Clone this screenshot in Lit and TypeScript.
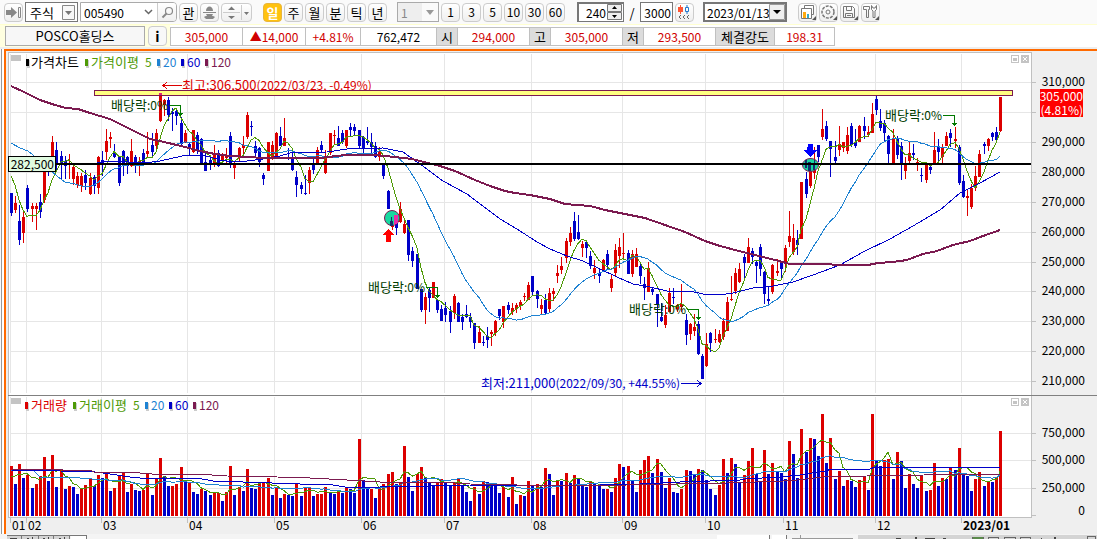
import { LitElement, html, svg, css } from "lit";
import { customElement, state } from "lit/decorators.js";

/* One session per entry: direction (r = up, b = down), then high, body top,
   body bottom, low and volume top, all in plot units. */
const SESSIONS = `
b193,193,213,216,466 r196,203,210,213,484 b205,221,240,245,464 r212,217,233,243,478 b185,188,209,212,475
r203,206,209,222,488 r203,206,209,230,484 b194,202,212,218,476 r165,168,200,203,457 b162,165,172,176,481
r136,142,164,170,455 b142,150,164,170,487 b151,156,164,179,469 b156,161,166,179,489 r154,163,165,179,486
r164,167,179,185,487 r172,176,185,188,494 r173,176,186,192,489 b170,175,183,190,485 r173,178,194,195,479
b175,177,186,194,486 r156,157,188,194,475 b151,160,165,176,478 r129,141,152,160,474 r132,137,139,148,491
b144,153,157,158,488 b156,157,183,186,476 b150,151,165,176,473 b156,157,166,174,492 r139,151,166,167,484
b155,157,162,173,490 r157,161,163,176,491 b149,153,163,165,490 r132,151,154,157,474 b133,145,152,156,495
r129,133,146,150,479 r93,94,121,122,458 r99,100,105,116,476 b97,100,115,121,486 b108,112,114,131,486
b110,111,116,125,484 b117,123,144,145,467 r130,133,142,143,482 b142,144,148,155,482 r130,130,152,153,492
b132,135,150,154,494 b138,139,163,164,489 b152,162,171,171,491 b158,160,164,170,495 r145,155,164,167,493
b150,153,166,167,493 r153,156,160,164,501 r148,156,158,164,492 b132,136,165,168,466 r162,165,168,179,495
r147,148,158,161,487 r136,145,148,155,491 r112,115,137,139,469 b121,126,127,136,488 b141,146,153,157,489
b147,148,162,167,482 b173,175,179,185,482 r142,142,171,171,478 r141,145,158,160,495 r132,133,158,159,488
b127,136,146,146,498 r118,138,146,146,494 b148,153,154,160,495 b153,157,170,171,496 b171,177,185,197,483
b182,185,189,194,496 b175,193,194,195,488 r167,170,183,194,487 b158,165,170,174,496 r147,150,164,164,494
b141,145,150,153,494 r150,156,173,174,487 r133,133,153,155,493 r130,135,136,145,494 b126,138,146,146,491
b130,133,142,144,493 r130,130,146,148,487 b123,127,130,136,489 b124,127,131,135,493 b130,130,146,149,439
b136,137,148,153,480 b127,141,143,145,489 b133,142,147,153,489 b142,146,157,158,498 r147,152,157,161,487
b164,165,176,179,484 b190,191,209,209,474 r217,221,227,230,472 b213,215,228,235,484 r202,209,222,223,483
r220,224,233,234,446 b220,220,255,261,477 b247,251,261,267,491 b254,254,289,289,474 b289,289,310,312,467
r293,297,310,324,478 b288,290,298,312,482 r282,282,298,298,486 b299,300,310,313,482 b305,309,321,321,479
b302,308,315,322,482 b306,311,322,333,486 r294,296,313,319,483 b302,303,322,322,479 b314,317,322,330,486
b305,314,317,318,492 b313,317,322,328,501 b323,323,343,349,487 r326,332,343,343,494 b336,342,343,346,481
b327,336,340,348,482 r330,332,334,346,485 r320,321,333,336,486 b309,309,316,320,493 r306,306,322,328,487
b302,305,310,314,497 r303,308,312,315,477 r303,305,309,313,504 r300,302,306,310,495 r293,296,297,301,496
r282,285,300,300,481 b276,276,292,296,485 b290,291,299,308,484 r299,305,309,315,487 b294,300,313,315,468
r288,293,309,313,474 r288,291,294,301,495 r265,273,276,283,480 r257,266,270,274,481 r238,241,258,263,473
r227,233,242,246,483 b212,221,239,241,475 b215,232,239,240,478 r241,244,248,257,485 b241,242,248,258,487
b251,256,266,269,481 r260,268,273,279,484 b269,273,276,283,485 r259,260,271,271,489 b250,254,265,270,489
r275,279,288,292,492 r244,250,273,277,478 r238,247,256,268,464 r233,253,254,260,467 b250,253,274,274,466
r250,254,274,277,481 r248,254,267,267,492 b262,266,276,284,470 b277,284,288,300,460 r262,268,292,292,456
b287,289,292,295,473 b294,294,304,327,459 b303,317,321,322,472 r305,315,325,328,488 r288,293,312,312,478
b288,297,298,304,492 r304,305,309,312,493 r284,304,307,312,489 b314,320,335,345,470 r323,324,334,340,471
r314,327,331,336,474 b321,324,354,355,469 b354,356,379,379,470 r333,344,366,367,480 b332,333,343,352,489
r329,339,340,343,495 r330,334,342,343,485 r318,321,337,340,459 r297,302,331,331,473 r276,299,300,301,458
r268,273,291,294,464 r263,269,282,283,482 b254,257,263,279,475 r238,247,263,263,461 b248,251,257,264,448
b261,262,266,283,474 b244,247,269,276,481 b271,272,294,304,450 b287,299,301,306,474 r264,265,292,294,463
r259,271,273,276,472 b262,263,269,279,473 r245,248,262,272,479 r211,236,242,247,441 r224,238,252,255,454
b230,240,245,255,478 r182,182,239,239,429 b172,179,194,198,452 r158,162,186,188,438 r147,160,173,179,439
b145,145,157,162,456 r109,129,137,140,414 b121,126,139,141,463 b141,141,149,177,438 b141,157,161,163,479
r126,144,150,156,471 r142,142,148,152,486 r127,135,151,154,480 b123,126,145,147,481 b129,142,146,148,487
r125,126,142,142,480 b117,126,131,139,477 r126,132,135,137,490 r103,114,133,133,414 b93,99,110,115,461
b109,121,128,131,466 b120,123,133,141,460 b135,136,154,164,459 r129,138,163,163,479 b136,138,155,159,452
b142,146,164,180,461 r157,164,171,179,488 r142,153,161,164,474 b144,153,155,160,484 r158,162,163,171,488
b168,175,176,182,475 r164,165,180,183,491 b165,167,170,174,490 r132,150,164,164,463 b139,146,152,162,486
r144,147,157,164,478 r132,136,146,146,479 b129,133,138,147,468 r127,139,141,148,470 b145,147,183,185,448
b175,181,197,198,474 r190,196,198,216,476 r184,188,207,209,491 r166,176,188,191,479 r150,154,177,177,472
b142,144,146,154,486 r138,139,146,151,481 b132,133,137,141,482 b127,132,140,140,478 r97,97,131,132,431`
  .trim()
  .split(/\s+/)
  .map((s) => {
    const [high, top, bottom, low, vol] = s.slice(1).split(",").map(Number);
    return { up: s[0] === "r", high, top, bottom, low, vol };
  });

const STEP = 4.139;
const FIRST = 11.4;
const VOL_BASE = 516;
const xOf = (i: number) => Math.floor(FIRST + i * STEP);

const bar = (x: number, y: number, w: number, h: number) => `M${x} ${y}h${w}v${Math.max(1, h)}h${-w}z`;

const candles = (up: boolean) =>
  SESSIONS.map((s, i) =>
    s.up !== up
      ? ""
      : bar(xOf(i), s.high, 1, s.low - s.high) + bar(xOf(i) - 1, s.top, 3, s.bottom - s.top)
  ).join("");

/* A volume bar is red when it is at least as tall as the one before it. */
const volumes = (up: boolean) =>
  SESSIONS.map((s, i) =>
    (i === 0 || s.vol <= SESSIONS[i - 1].vol) === up ? bar(xOf(i) - 1, s.vol, 3, VOL_BASE - s.vol) : ""
  ).join("");

/* Moving average over n sessions, preceded by the points carried over from earlier data. */
const average = (values: number[], n: number, lead: string) => {
  const pts = [lead];
  for (let i = n - 1; i < values.length; i++) {
    let sum = 0;
    for (let k = i - n + 1; k <= i; k++) sum += values[k];
    pts.push(`${xOf(i)},${(sum / n).toFixed(1)}`);
  }
  return pts.join(" ");
};

const closes = SESSIONS.map((s) => (s.up ? s.top : s.bottom));
const vols = SESSIONS.map((s) => s.vol);

const PRICE_MA = {
  ma5: average(closes, 5, "11,176 15,185 19,200 23,210"),
  ma20: average(closes, 20, "11,143 20,148 28,151 33,155 40,163 50,170 58,177 65,182 75,184 85,187"),
  ma60:
    "97,163 110,161 145,163 160,161 173,158 187,155 200,155 210,157 220,160 233,162 247,161 263,159 280,156 290,153 327,152 347,149 383,148 403,152 410,157 427,169 443,181 467,194 483,206 500,219 517,229 537,242 550,249 567,256 583,261 600,269 617,277 633,284 650,287 667,291 690,291 703,294 720,295 733,293 753,288 773,286 793,282 813,275 840,265 863,252 890,239 913,226 940,210 960,193 980,183 1000,172",
  ma120:
    "11,86 24,92 40,100 55,105 66,108 78,109 90,113 110,119 130,129 150,139 160,141 185,147 200,151 215,154 230,156 250,157 262,158 300,158 320,158 345,155 375,155 395,157 412,159 428,163 440,166 455,171 475,180 490,186 505,191 515,193 530,195 550,199 565,204 590,206 605,210 625,214 645,218 665,225 685,232 705,241 720,246 735,250 755,255 775,260 790,264 823,264 840,265 868,265 878,263 893,262 907,260 923,254 937,251 953,245 970,241 983,236 1000,230",
};

const VOLUME_MA = {
  ma5: average(vols, 5, "11,476 15,476 19,474 23,474"),
  ma20: average(vols, 20, "11,470 33,470 40,477 60,477 80,478"),
  ma60:
    "11,470 60,471 95,472 110,474 130,477 150,479 160,478 197,478 213,481 243,482 300,484 333,485 345,487 380,487 430,486 470,485 520,485 600,485 640,484 680,482 740,480 745,479 780,477 800,475 825,471 832,469 870,469 875,467 960,468 975,467 1000,468",
  ma120:
    "11,469 63,470 92,471 94,472 128,472 152,474 197,474 227,476 277,477 310,478 347,480 380,482 440,482 470,484 517,485 530,486 627,485 727,483 783,481 797,480 824,477 867,476 924,475 930,474 1000,474",
};

const PRICE_TICKS: [number, string][] = [
  [82, "310,000"], [112, ""], [142, "290,000"], [172, "280,000"], [202, "270,000"], [232, "260,000"],
  [262, "250,000"], [291, "240,000"], [321, "230,000"], [351, "220,000"], [381, "210,000"],
];
const VOLUME_TICKS: [number, string][] = [[433, "750,000"], [460, "500,000"], [488, "250,000"]];
const MONTHS: [number, string][] = [
  [10, "01"], [26, "02"], [101, "03"], [187, "04"], [274, "05"], [361, "06"], [444, "07"],
  [531, "08"], [622, "09"], [705, "10"], [783, "11"], [875, "12"], [961, "2023/01"],
];

const GREEN = "#4e9a06";
const SKY = "#1e82d2";
const BLUE = "#0000c8";
const WINE = "#7b1a50";
const RED = "#dc0000";

@customElement("stock-chart")
class StockChart extends LitElement {
  static styles = css`
    :host { display: block; }
    svg { display: block; width: 100%; height: auto; font: 12px "Noto Sans CJK KR", sans-serif; }
    .crisp { shape-rendering: crispEdges; }
    .line { fill: none; shape-rendering: crispEdges; }
    .ko { font-size: 13px; }
    .end { text-anchor: end; }
    .bold { font-weight: 700; }
  `;

  private legend(y: number, items: [number, number, string, string][]) {
    return svg`
      <rect x="11" y=${y - 12} width="10" height="6" fill="#c4c4c4" />
      ${items.map(
        ([x, tx, color, label]) => svg`
          <rect x=${x + 1} y=${y - 7} width="3" height="8" fill="#ccc" />
          <rect x=${x} y=${y - 8} width="3" height="7" fill=${color} />
          <text class=${/[가-힣]/.test(label) ? "ko" : ""} x=${tx} y=${y} fill=${color}>${label}</text>`
      )}`;
  }

  private paneButtons(y: number) {
    return svg`
      <g class="crisp" fill="none" stroke="#c4c4c4">
        <rect x="1011.5" y=${y + 0.5} width="7" height="7" />
        <path fill="#c4c4c4" stroke="none" d=${`M1013 ${y + 3}h4v3h-4zM1021 ${y}h8v8h-8z`} />
      </g>
      <path stroke="#fff" d=${`M1023 ${y + 2}l4 4m0-4l-4 4`} />`;
  }

  private dividend(x: number, y: number) {
    return svg`
      <text x=${x} y=${y} fill="#003c00"><tspan class="ko">배당락</tspan>:0%</text>
      <g class="crisp">
        <path fill="none" stroke="#007800" d=${`M${x + 58} ${y - 4.5}h11.5v10`} />
        <path fill="#007800" d=${`M${x + 67} ${y + 3}h5l-2 3h-1z`} />
      </g>`;
  }

  render() {
    return html`
      <svg viewBox="6 51 1091 483" role="img" aria-label="POSCO홀딩스 일봉 차트">
        <rect class="crisp" x="6" y="51" width="1091" height="483" fill="#efefef" />
        <g class="crisp">
          <rect x="8" y="52" width="1024" height="466" fill="#c0c0c0" />
          <rect x="9" y="53" width="1022" height="464" fill="#fff" />
          ${MONTHS.map(([x]) => svg`
            <path fill="#e6e6e6" d=${`M${x} 54h1v339h-1zM${x} 397h1v120h-1z`} />
            <rect x=${x} y="518" width="1" height="5" fill="#c0c0c0" />`)}
          ${[...PRICE_TICKS, ...VOLUME_TICKS].map(([y]) => svg`
            <rect x="11" y=${y} width="1020" height="1" fill="#e6e6e6" />
            <rect x="1032" y=${y} width="4" height="1" fill="#c0c0c0" />`)}
          <rect x="1032" y="515" width="4" height="1" fill="#c0c0c0" />
          <rect x="8" y="395" width="1089" height="1" fill="#808080" />
          <path fill=${RED} d=${candles(true)} />
          <path fill=${BLUE} d=${candles(false)} />
          <path fill=${RED} d=${volumes(true)} />
          <path fill=${BLUE} d=${volumes(false)} />
        </g>

        ${[PRICE_MA, VOLUME_MA].map((m, k) => svg`
          <polyline class="line" stroke=${GREEN} points=${m.ma5} />
          <polyline class="line" stroke=${SKY} points=${m.ma20} />
          <polyline class="line" stroke=${BLUE} points=${m.ma60} />
          <polyline class="line" stroke=${WINE} stroke-width=${k ? 1 : 2} points=${m.ma120} />`)}

        ${this.dividend(111, 110)} ${this.dividend(368, 292)} ${this.dividend(629, 314)} ${this.dividend(885, 120)}

        <text class="ko" x="182" y="90" fill=${RED}>최고:306,500<tspan font-size="12">(2022/03/23, -0.49%)</tspan></text>
        <path class="line" stroke=${RED} d="M182 85.5h-19m4-3.5l-4 3.5l4 3.5" />
        <text class="ko end" x="680" y="388" fill=${BLUE}>최저:211,000<tspan font-size="12">(2022/09/30, +44.55%)</tspan></text>
        <path class="line" stroke=${BLUE} d="M681 383.5h20m-4-3.5l4 3.5l-4 3.5" />

        <g class="crisp">
          <rect x="94.5" y="90.5" width="918" height="5" fill="#ffff80" stroke=${WINE} />
          <rect x="159" y="93" width="3" height="2" fill="#e0207c" />
          <rect x="8" y="163" width="1023" height="2" fill="#000" />
          <rect x="8.5" y="156.5" width="47" height="15" fill="#e0fbe0" stroke="#000" />
        </g>
        <text class="end" x="54" y="169">282,500</text>

        <circle cx="392" cy="218" r="7.5" fill="#18d8a0" stroke=${WINE} />
        <path class="crisp" fill="#15306e" d="M391 217h1v4h1v5h-3v-5h1z" />
        <path class="crisp" fill="#ec2ca8" d="M394 215h4v8l-4 2z" />
        <path class="crisp" fill="#f00" d="M388.5 229l6.5 6h-4v7h-5v-7h-4z" />
        <ellipse cx="810.5" cy="165" rx="8" ry="6.5" fill="#18d8a0" stroke=${WINE} />
        <path class="crisp" fill="#15306e" d="M808 162h3v9h-3zM814 160h1v10h-2v-7h1zM805 160h2v8h-2z" />
        <rect class="crisp" x="802" y="163" width="17" height="2" />
        <path class="crisp" fill="#00f" d="M808 144h5v6h4l-6.5 7l-6.5-7h3z" />

        ${this.legend(67, [
          [26, 31, "#000", "가격차트"], [85, 91, GREEN, "가격이평"], [157, 163, SKY, "20"], [181, 187, BLUE, "60"], [205, 211, WINE, "120"],
        ])}
        <text x="145" y="67" fill=${GREEN}>5</text>
        ${this.legend(410, [
          [25, 31, RED, "거래량"], [73, 79, GREEN, "거래이평"], [145, 151, SKY, "20"], [169, 175, BLUE, "60"], [193, 199, WINE, "120"],
        ])}
        <text x="133" y="410" fill=${GREEN}>5</text>
        ${this.paneButtons(55)} ${this.paneButtons(398)}

        ${[...PRICE_TICKS, ...VOLUME_TICKS].map(([y, t]) => (t ? svg`<text class="end" x="1085" y=${y + 4}>${t}</text>` : ""))}
        <text class="end" x="1085" y="515">0</text>
        <rect class="crisp" x="1040" y="89" width="43" height="28" fill="#f00" />
        <text class="end" fill="#fff"><tspan x="1083" y="101">305,000</tspan><tspan x="1083" y="115">(4.81%)</tspan></text>
        ${MONTHS.map(([x, t]) => svg`<text class=${t.length > 2 ? "bold" : ""} x=${x + 2} y="530">${t}</text>`)}
      </svg>
    `;
  }
}

@customElement("chart-toolbar")
class ChartToolbar extends LitElement {
  @state() private period = "일";

  static styles = css`
    :host {
      display: flex; align-items: center; height: 24px; padding-left: 4px; gap: 2px;
      background: #fafafa; border-bottom: 1px solid #ffffd0;
      font: 13px "Noto Sans CJK KR", sans-serif; color: #000;
    }
    button, input, select { font: inherit; color: inherit; box-sizing: border-box; margin: 0; padding: 0; }
    button {
      flex: none; width: 19px; height: 19px; border: 1px solid #ccc; border-radius: 4px;
      background: linear-gradient(#fff, #efefef); display: grid; place-items: center; line-height: 1;
    }
    .on { background: #ffc20e; border-color: #e8b53c; color: #fff; font-weight: 700; }
    .num { font-size: 12px; }
    .box { display: flex; align-items: center; height: 20px; box-sizing: border-box; border: 1px solid #777; background: #fff; font-size: 12px; flex: none; }
    .box select, .box input { flex: 1; width: 0; min-width: 0; height: 100%; border: 0; background: none; appearance: none; outline: 0; }
    .kind { width: 53px; padding: 0 2px 0 4px; font-size: 13px; }
    .code { width: 97px; padding-left: 3px; border-color: #aaa; border-radius: 0 4px 4px 0; }
    .code button { border-width: 0 0 0 1px; height: 18px; border-radius: 0 3px 3px 0; }
    .unit { width: 42px; padding-left: 3px; color: #888; background: #eee; border-color: #aaa; margin-left: 8px; }
    .count { width: 47px; border-width: 2px 1px 1px 2px; margin-left: 10px; }
    .count input, .total input { text-align: right; }
    .total { width: 33px; padding-right: 1px; }
    .date { width: 84px; border-width: 2px; padding-left: 2px; margin-left: 7px; }
    .slash { width: 12px; text-align: center; flex: none; }
    .gap { margin-left: 9px; }
    .spin { width: 31px; }
    .icon { display: block; flex: none; }
  `;

  private periodButton(p: string, i: number) {
    return html`<button class="${this.period === p ? "on" : ""} ${i ? "" : "gap"}" @click=${() => (this.period = p)}>${p}</button>`;
  }

  render() {
    return html`
      <button aria-label="이동"><svg class="icon" width="15" height="13" viewBox="0 0 15 13"><path fill="#888" d="M0 4h5V1l6 5.5-6 5.5V9H0z" /><path fill="none" stroke="#888" d="M12.5 1.5h2v10h-2z" /></svg></button>
      <label class="box kind">
        <select aria-label="종목 구분"><option>주식</option></select>
        <svg class="icon" width="13" height="15" viewBox="0 0 13 15"><path fill="#f8f8f8" stroke="#888" d="M.5.5h12v14H.5z" /><path fill="#777" d="M3 6h7l-3.5 4z" /></svg>
      </label>
      <label class="box code">
        <input aria-label="종목 코드" value="005490" />
        <svg class="icon" width="18" height="14" viewBox="0 0 18 14"><path fill="none" stroke="#666" stroke-width="1.5" d="M6 5l3.5 3.5L13 5" /></svg>
        <button aria-label="검색"><svg class="icon" width="13" height="13" viewBox="0 0 13 13"><circle cx="8" cy="5" r="3.5" fill="none" stroke="#888" stroke-width="1.2" /><path stroke="#888" stroke-width="2" d="M5.5 7.5L1.5 11.5" /></svg></button>
      </label>
      <button>관</button>
      <button aria-label="알림"><svg class="icon" width="15" height="15" viewBox="0 0 15 15"><path fill="#888" d="M4 6c0-6 7-6 7 0zM1 7h13v1H1zM4 9h7l-1 2H5zM2 12c3-2 8-2 11 0l-2 2H4z" /></svg></button>
      <button class="spin" aria-label="순서"><svg class="icon" width="29" height="15" viewBox="0 0 29 15"><path fill="#777" d="M6 5l3.5-3.5L13 5zM6 11h7l-3.5 3zM22 7h5l-2.5 3z" /><path stroke="#ccc" d="M1 7.5h17M19.5 0v15" /></svg></button>
      ${["일", "주", "월", "분", "틱", "년"].map((p, i) => this.periodButton(p, i))}
      <label class="box unit">
        <select aria-label="주기"><option>1</option></select>
        <svg class="icon" width="16" height="18" viewBox="0 0 16 18"><path fill="#fafafa" d="M0 0h16v18H0z" /><path fill="#999" d="M4 7h8l-4 5z" /></svg>
      </label>
      ${["1", "3", "5", "10", "30", "60"].map((n) => html`<button class="num">${n}</button>`)}
      <label class="box count">
        <input aria-label="봉 개수" value="240" />
        <svg class="icon" width="17" height="17" viewBox="0 0 17 17"><path fill="#eee" stroke="#777" d="M1.5.5h14v7h-14zM1.5 8.5h14v7h-14z" /><path d="M6 5h5L8.5 2zM6 11h5l-2.5 3z" /></svg>
      </label>
      <span class="slash">/</span>
      <label class="box total"><input aria-label="전체 개수" value="3000" /></label>
      <button aria-label="봉 설정"><svg class="icon" width="15" height="15" viewBox="0 0 15 15"><path fill="#f53" d="M1 2h5v5H1zM3 0h1v9H3z" /><path fill="none" stroke="#27c" d="M8.5 2.5h3v4h-3zM10 0v2M10 7v2" /><path fill="none" stroke="#666" d="M4 10l-2 2 2 2M8 10l-2 2 2 2M12 10l-2 2 2 2" /></svg></button>
      <label class="box date">
        <input aria-label="날짜" value="2023/01/13" />
        <svg class="icon" width="16" height="16" viewBox="0 0 16 16"><path fill="#f0f0f0" stroke="#999" d="M.5.5h15v15H.5z" /><path d="M4 6h8l-4 4z" /></svg>
      </label>
      <button class="gap" aria-label="차트 유형"><svg class="icon" width="17" height="17" viewBox="0 0 17 17"><path fill="#fff" stroke="#777" d="M5.5 1.5h9v9h-9z" /><path fill="#fff" stroke="#777" d="M2.5 4.5h10v10h-10z" /><path fill="#fa1" d="M4 8h3v6H4z" /><path fill="#3ac" d="M8 10h2v4H8z" /><path fill="#555" d="M17 12v4h-4z" /></svg></button>
      <button aria-label="설정"><svg class="icon" width="17" height="17" viewBox="0 0 17 17"><circle cx="8" cy="8" r="6" fill="none" stroke="#777" stroke-width="1.5" stroke-dasharray="3 1.2" /><circle cx="8" cy="8" r="2" fill="none" stroke="#777" /><path fill="#555" d="M17 12v4h-4z" /></svg></button>
      <button aria-label="저장"><svg class="icon" width="17" height="17" viewBox="0 0 17 17"><path fill="none" stroke="#777" d="M2.5 2.5h9l2 2v9h-11zM5.5 2.5v4h5v-4M4.5 13.5v-4h7v4M6 11.5h4" /><path fill="#555" d="M17 12v4h-4z" /></svg></button>
      <button aria-label="도구"><svg class="icon" width="17" height="17" viewBox="0 0 17 17"><path fill="none" stroke="#777" d="M1.5 2.5h6v3h-1v8h-2v-8h-3zM9.5 1.5v4l1.500 1.5v6.5h2V7l1.5-1.5v-4L13 4h-2z" /><path fill="#555" d="M17 12v4h-4z" /></svg></button>
    `;
  }
}

@customElement("quote-bar")
class QuoteBar extends LitElement {
  static styles = css`
    :host { display: flex; align-items: center; height: 22px; background: #fff; border-bottom: 2px solid #eee; font: 12px "Noto Sans CJK KR", sans-serif; }
    .name { display: flex; align-items: center; gap: 3px; height: 22px; padding: 0 3px 0 5px; background: #ffffe0; }
    .title { width: 140px; height: 20px; box-sizing: border-box; border: 1px solid #aaa; background: #f7f7f7; text-align: center; line-height: 18px; font-size: 13px; }
    button { width: 19px; height: 20px; padding: 0; border: 1px solid #ccc; border-radius: 4px; background: #f8f8f8; font: 700 14px/1 "Noto Sans CJK KR", sans-serif; }
    dl { display: flex; margin: 0; height: 19px; box-sizing: border-box; border: 1px solid #c0c0c0; line-height: 17px; }
    dd, dt { margin: 0; text-align: center; box-sizing: border-box; border-right: 1px solid #c0c0c0; white-space: nowrap; }
    dt { width: 21px; background: #dcdcdc; font-size: 13px; }
    dd { width: 72px; color: #d00000; }
    dd:last-child { border: 0; }
    .w63 { width: 63px; }
    .w55 { width: 55px; }
    .w59 { width: 59px; }
    .vol { width: 76px; color: #000; }
  `;
  render() {
    return html`
      <div class="name"><div class="title">POSCO홀딩스</div><button>i</button></div>
      <dl>
        <dd>305,000</dd><dd class="w63">▲14,000</dd><dd class="w55">+4.81%</dd><dd class="vol">762,472</dd>
        <dt>시</dt><dd>294,000</dd><dt>고</dt><dd>305,000</dd><dt>저</dt><dd>293,500</dd>
        <dt class="w59">체결강도</dt><dd class="w59">198.31</dd>
      </dl>
    `;
  }
}

@customElement("app-root")
class AppRoot extends LitElement {
  static styles = css`
    :host { display: block; background: #fafafa; overflow: hidden; }
    .frame { margin-left: 1px; border-left: 1px solid #999; padding-left: 2px; background: #fff; }
    .panel { border-left: 2px solid #ff6a00; border-top: 2px solid #ff6a00; }
    .dock { display: block; width: 100%; height: auto; shape-rendering: crispEdges; }
  `;
  render() {
    return html`
      <chart-toolbar></chart-toolbar>
      <quote-bar></quote-bar>
      <div class="frame"><div class="panel"><stock-chart></stock-chart></div></div>
      <svg class="dock" viewBox="0 534 1097 5" aria-hidden="true">
        <path fill="#f4f4f4" d="M0 534h1097v5H0z" />
        <path fill="#d4d4d4" d="M7 535h63v4H7zM858 535h239v4H858z" />
        <path fill="#fff" d="M71 535h15v4H71zM717 535h53v4h-53zM772 535h14v4h-14z" />
        <path fill="#777" d="M7 535h79v1H7zM21 535h1v4h-1zM38 535h1v4h-1zM53 535h1v4h-1zM69 535h1v4h-1zM86 535h1v4h-1zM769 535h1v4h-1zM786 535h1v4h-1z" />
        <path fill="#444" d="M10 538h7v1h-7zM27 538h2v1h-2zM32 537h1v2h-1zM43 538h2v1h-2zM48 537h1v2h-1zM59 538h2v1h-2zM64 537h1v2h-1zM896 538h5v1h-5zM915 537h2v2h-2zM925 538h10v1h-10zM943 538h3v1h-3zM1041 538h1v1h-1zM1054 537h2v2h-2z" />
        <path fill="#999" d="M792 538h61v1h-61zM800 535h1v4h-1z" />
        <path fill="none" stroke="#666" d="M972.5 539v-2h11v2M988.5 539v-2h10v2M1004.5 539v-2h11v2M1020.5 539v-2h10v2M1087.5 539v-3h8v3" />
        <path fill="#5a8a4a" d="M973 537h10v2h-10z" />
      </svg>
    `;
  }
}
